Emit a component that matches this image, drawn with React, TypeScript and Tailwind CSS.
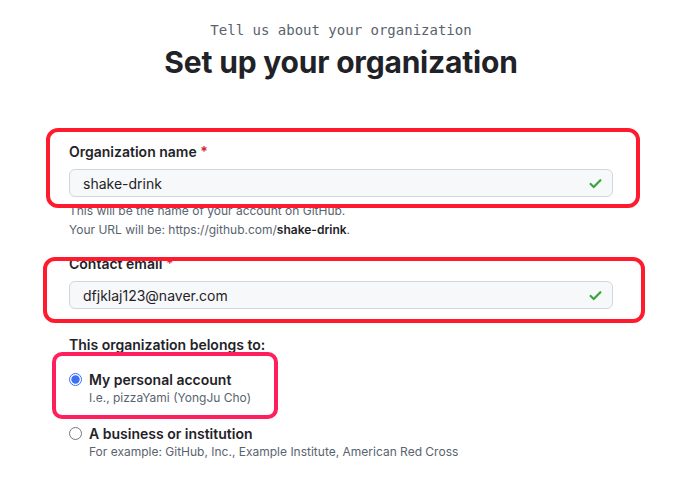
import React from 'react';

// Green check shown at the right end of a validated input
const CheckIcon = ({ className }: { className?: string }) => (
  <svg className={className} viewBox="0 0 16 16" fill="none" stroke="currentColor" strokeWidth={2.4} strokeLinecap="round" strokeLinejoin="round">
    <path d="M2.8 8.6l3.3 3.2 7.1-7.3" />
  </svg>
);

const Radio = ({ checked }: { checked?: boolean }) =>
  checked ? (
    <svg className="w-[13px] h-[13px] shrink-0" viewBox="0 0 13 13">
      <circle cx="6.5" cy="6.5" r="6" fill="white" stroke="#3b6ff5" strokeWidth="1" />
      <circle cx="6.5" cy="6.5" r="4.2" fill="#3b6ff5" />
    </svg>
  ) : (
    <svg className="w-[13px] h-[13px] shrink-0" viewBox="0 0 13 13">
      <circle cx="6.5" cy="6.5" r="6" fill="white" stroke="#6e7781" strokeWidth="1" />
    </svg>
  );

interface FieldProps {
  label: string;
  value: string;
}

const Field = ({ label, value }: FieldProps) => (
  <div>
    <label className="block text-[14px] leading-[20px] font-semibold text-[#1f2328]">
      {label} <span className="text-[#d1242f]">*</span>
    </label>
    <div className="mt-[7px] h-[28px] flex items-center justify-between pl-[13px] pr-[9px] bg-[#f6f8fa] border border-[#d0d7de] rounded-[6px]">
      <span className="text-[14px] text-[#1f2328]">{value}</span>
      <CheckIcon className="w-[15px] h-[15px] text-[#3ca43d]" />
    </div>
  </div>
);

const OWNER_OPTIONS = [
  { label: 'My personal account', note: 'I.e., pizzaYami (YongJu Cho)', checked: true },
  {
    label: 'A business or institution',
    note: 'For example: GitHub, Inc., Example Institute, American Red Cross',
    checked: false,
  },
];

export default function App() {
  return (
    <div className="relative min-h-screen bg-white font-['Inter','Liberation_Sans',sans-serif] text-[#1f2328]">
      {/* Header */}
      <div className="w-[682px] pt-[20px] text-center">
        <p className="text-[14px] leading-[20px] text-[#59636e] font-['DejaVu_Sans_Mono','Liberation_Mono',monospace]">
          Tell us about your organization
        </p>
        <h1 className="mt-[2px] text-[30px] leading-[40px] font-bold tracking-[-0.2px] text-[#1f2328]">
          Set up your organization
        </h1>
      </div>

      {/* Form */}
      <div className="ml-[69px] w-[544px] mt-[60px]">
        <Field label="Organization name" value="shake-drink" />
        <div className="mt-[4px] text-[12px] leading-[19px] text-[#59636e]">
          <p>This will be the name of your account on GitHub.</p>
          <p>
            Your URL will be: https://github.com/<strong className="font-semibold text-[#1f2328]">shake-drink</strong>.
          </p>
        </div>

        <div className="mt-[15px]">
          <Field label="Contact email" value="dfjklaj123@naver.com" />
        </div>

        <h3 className="mt-[26px] text-[14px] leading-[20px] font-semibold">This organization belongs to:</h3>

        <div className="mt-[14px] flex flex-col gap-[16px]">
          {OWNER_OPTIONS.map((option) => (
            <div key={option.label}>
              <div className="flex items-center gap-[7px] h-[20px]">
                <Radio checked={option.checked} />
                <span className="text-[14px] font-semibold">{option.label}</span>
              </div>
              <p className="ml-[20px] text-[12px] leading-[18px] text-[#59636e]">{option.note}</p>
            </div>
          ))}
        </div>
      </div>

      {/* Annotation boxes drawn over the screenshot */}
      <div className="absolute left-[46px] top-[128px] w-[594px] h-[80px] border-4 border-[#ff1a2d] rounded-[12px]" />
      <div className="absolute left-[43px] top-[257px] w-[602px] h-[66px] border-4 border-[#ff1a2d] rounded-[12px]" />
      <div className="absolute left-[52px] top-[352px] w-[226px] h-[67px] border-4 border-[#ff1f5c] rounded-[10px]" />
    </div>
  );
}
